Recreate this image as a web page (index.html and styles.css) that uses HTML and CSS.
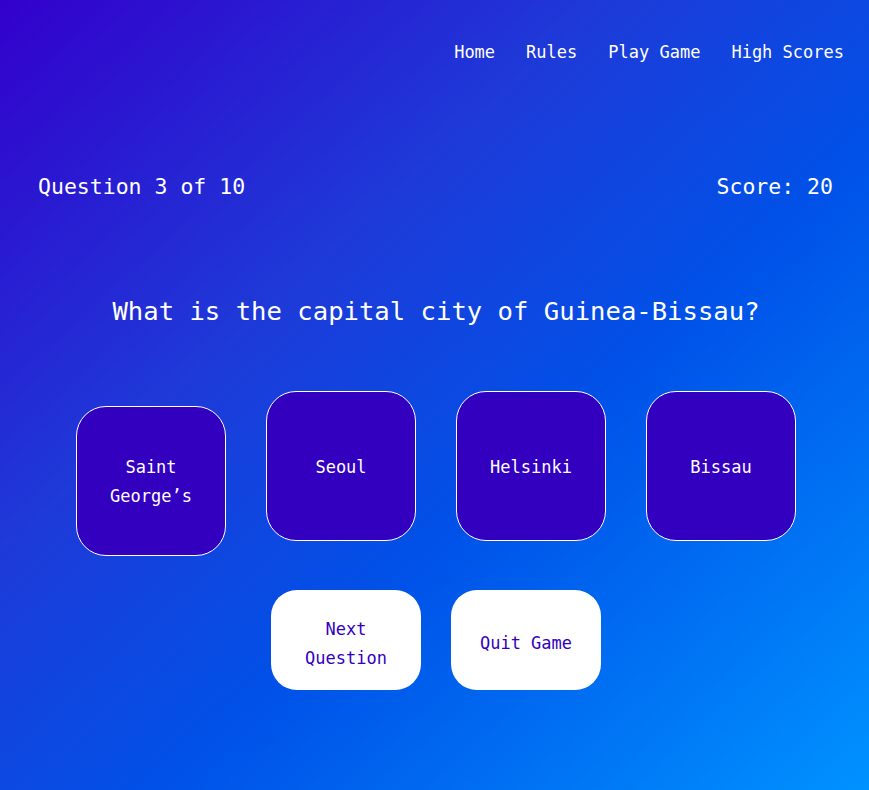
FILE: index.html
```html
<!DOCTYPE html>
<html lang="en">
<head>
<meta charset="utf-8">
<title>Capital Quiz</title>
<link rel="stylesheet" href="styles.css">
</head>
<body>
<nav class="nav">
  <a href="#">Home</a>
  <a href="#">Rules</a>
  <a href="#">Play Game</a>
  <a href="#">High Scores</a>
</nav>
<main class="game">
  <div class="status">
    <span>Question 3 of 10</span>
    <span>Score: 20</span>
  </div>
  <h1 class="question">What is the capital city of Guinea-Bissau?</h1>
  <div class="answers">
    <button class="answer">Saint George’s</button>
    <button class="answer">Seoul</button>
    <button class="answer">Helsinki</button>
    <button class="answer">Bissau</button>
  </div>
  <div class="controls">
    <button class="control">Next Question</button>
    <button class="control">Quit Game</button>
  </div>
</main>
</body>
</html>
```
FILE: styles.css
```css
html, body {
  margin: 0;
  height: 100%;
}
body {
  font-family: "DejaVu Sans Mono", "Liberation Mono", monospace;
  color: #fff;
  background: linear-gradient(to bottom right, #3300cc 0%, #1e3ad8 35%, #0052e8 60%, #0092ff 100%);
  min-height: 790px;
}
.nav {
  display: flex;
  justify-content: flex-end;
  gap: 31px;
  padding: 41px 25px 0 0;
  font-size: 17px;
  line-height: 22px;
}
.nav a {
  color: #fff;
  text-decoration: none;
}
.status {
  display: flex;
  justify-content: space-between;
  padding: 0 36px 0 38px;
  margin-top: 111px;
  font-size: 21.5px;
  line-height: 26px;
}
.question {
  margin: 95px 0 0;
  text-align: center;
  font-weight: normal;
  font-size: 25.6px;
  line-height: 32px;
  padding-left: 3px;
}
.answers {
  display: flex;
  justify-content: center;
  align-items: baseline;
  gap: 40px;
  margin-top: 64px;
  padding-left: 3px;
}
.answer {
  width: 150px;
  height: 150px;
  border: 1px solid #fff;
  border-radius: 30px;
  background: #3300c0;
  color: #fff;
  font-family: inherit;
  font-size: 17px;
  line-height: 29px;
  padding: 12px 20px 10px;
}
.controls {
  display: flex;
  justify-content: center;
  gap: 30px;
  margin-top: 34px;
  padding-left: 3px;
}
.control {
  width: 150px;
  height: 100px;
  border: none;
  border-radius: 26px;
  background: #fff;
  color: #3300c0;
  font-family: inherit;
  font-size: 17px;
  line-height: 29px;
  padding: 16px 14px 8px;
}
```
